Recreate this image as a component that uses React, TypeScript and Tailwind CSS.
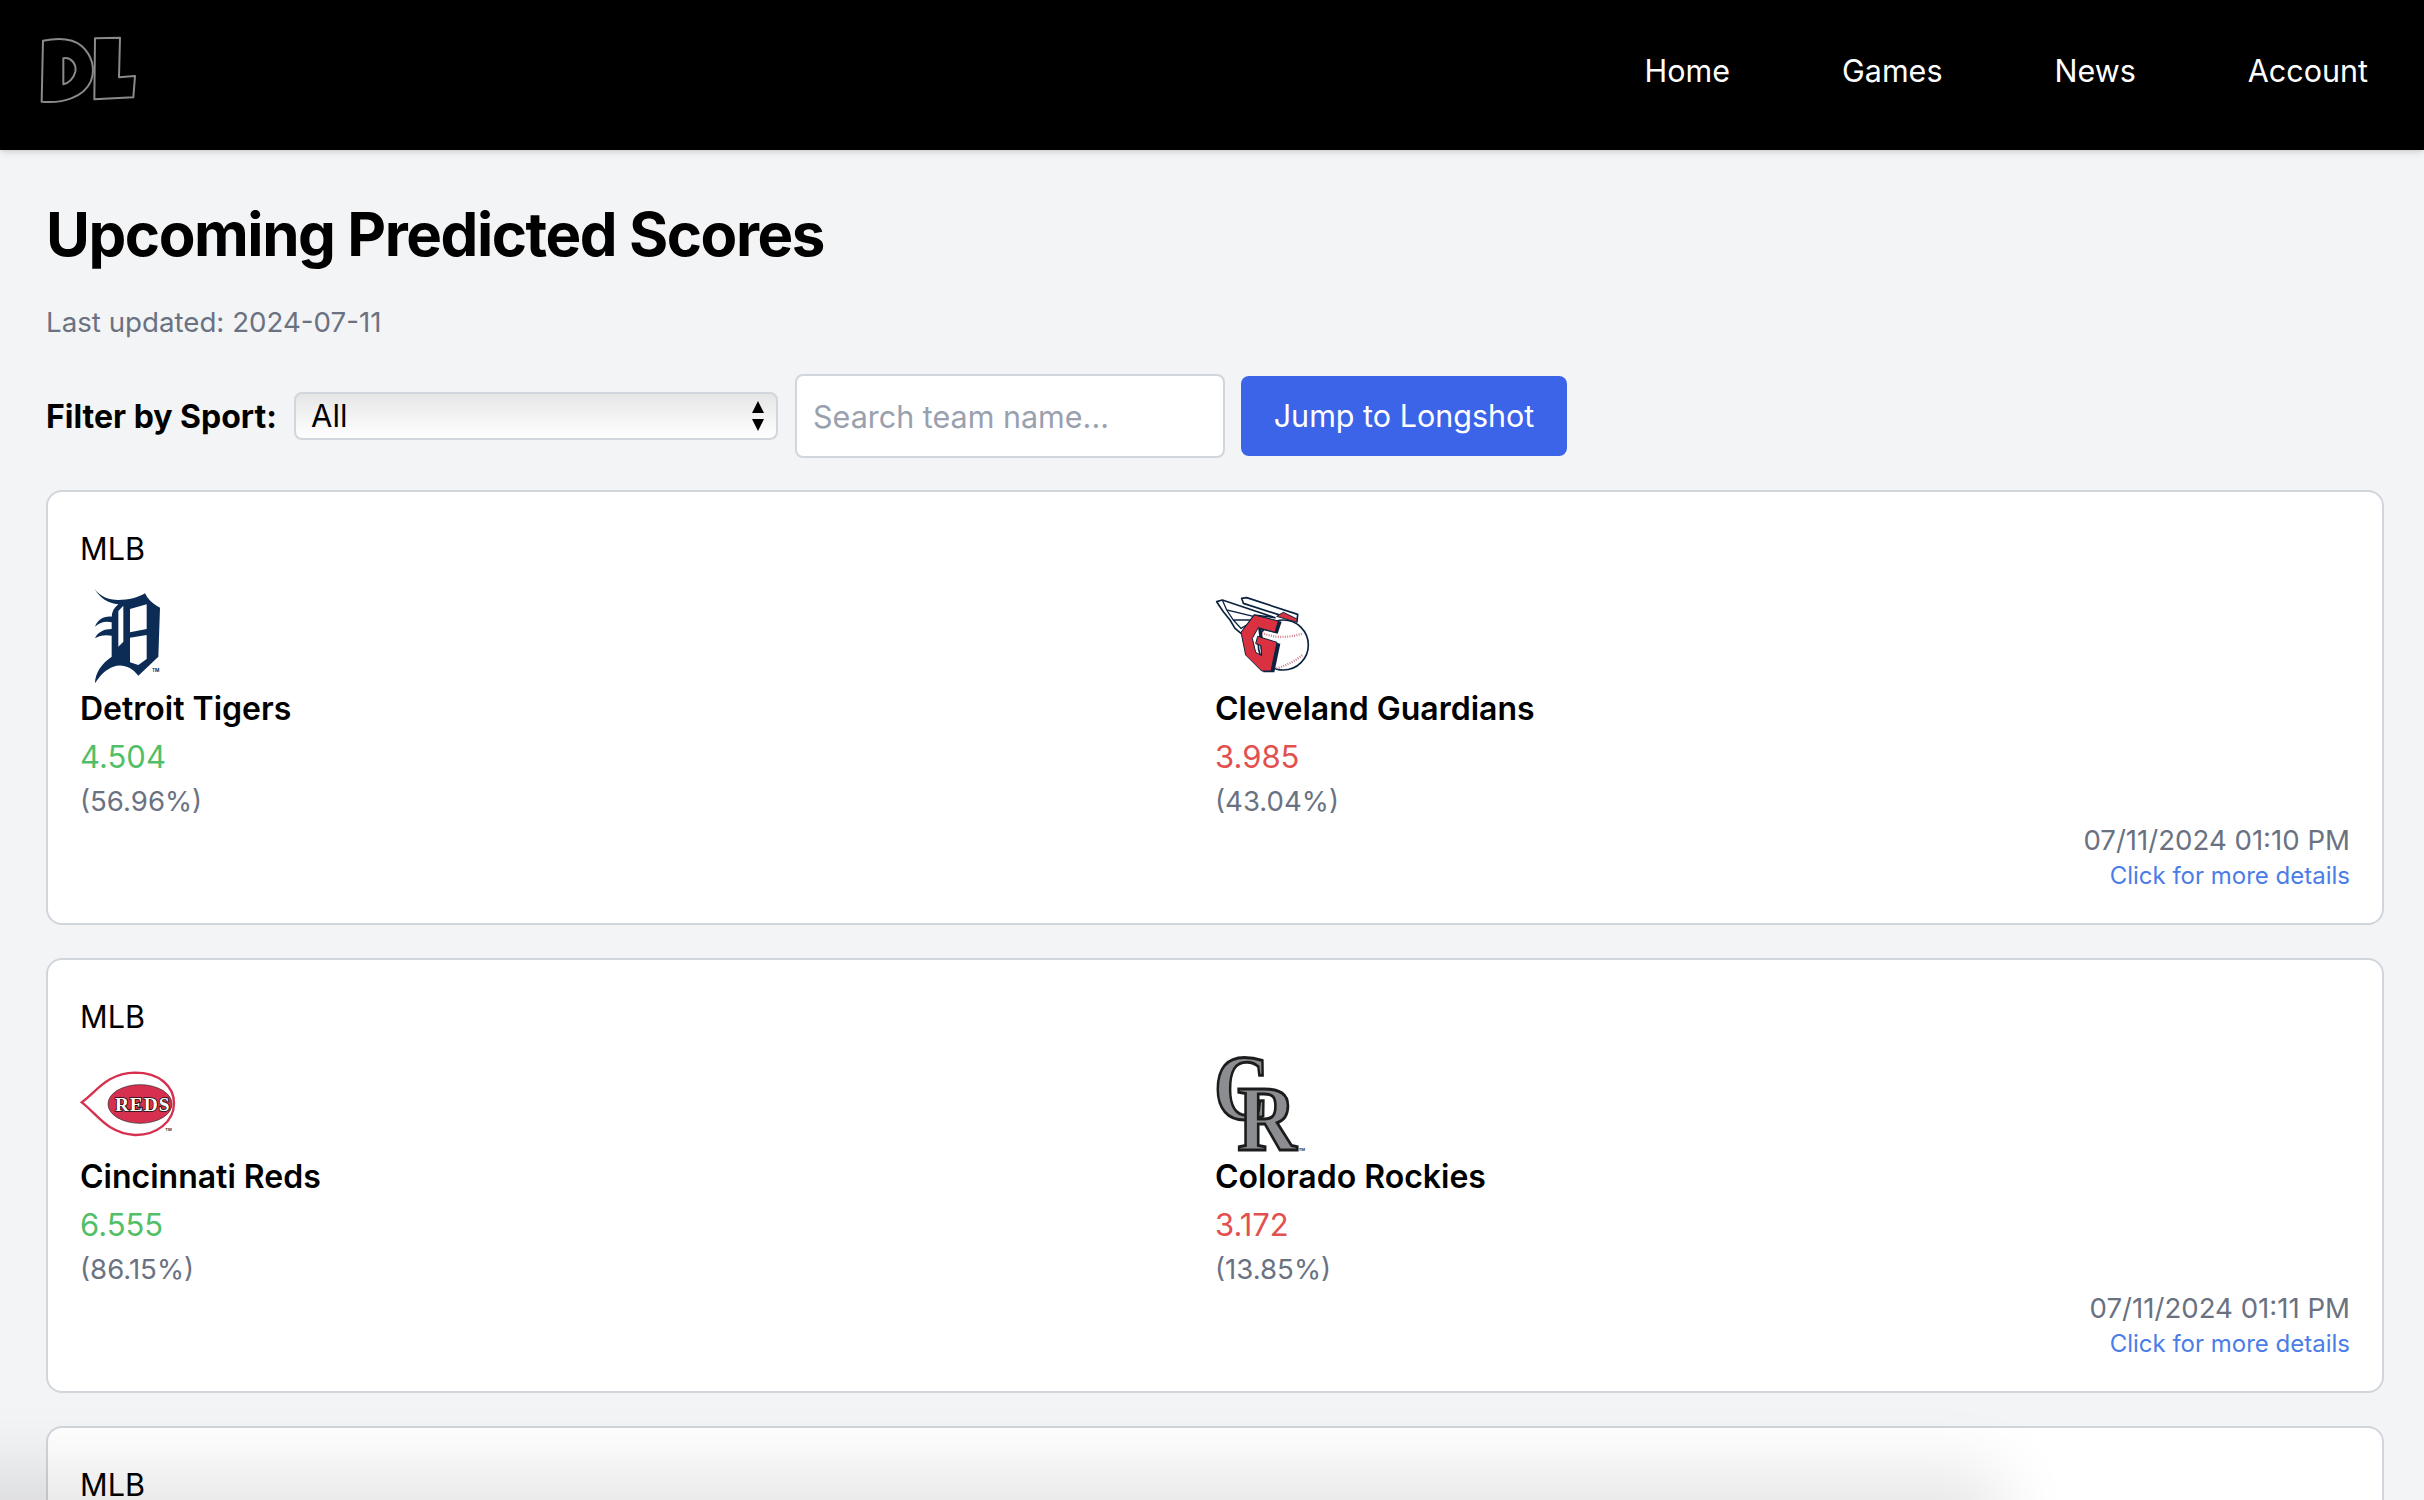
// Predicted scores page: nav, filter row, game cards
const GAMES = [
  {
    home: { name: "Detroit Tigers", score: "4.504", pct: "(56.96%)", logo: "tigers" },
    away: { name: "Cleveland Guardians", score: "3.985", pct: "(43.04%)", logo: "guardians" },
    date: "07/11/2024 01:10 PM",
  },
  {
    home: { name: "Cincinnati Reds", score: "6.555", pct: "(86.15%)", logo: "reds" },
    away: { name: "Colorado Rockies", score: "3.172", pct: "(13.85%)", logo: "rockies" },
    date: "07/11/2024 01:11 PM",
  },
];

function DlLogo() {
  return (
    <svg viewBox="0 0 900 450" className="w-[300px] h-[150px] shrink-0" fill="none" stroke="#8a8a8a" strokeWidth="6" strokeLinejoin="round">
      <path d="M129 122 C170 114 215 112 245 138 C275 165 288 205 272 245 C252 290 190 312 125 305 Z" />
      <path d="M190 175 C213 170 230 192 226 215 C221 235 206 250 190 253 Z" />
      <path d="M285 115 L360 113 L357 232 L405 228 L400 292 L283 298 Z" />
    </svg>
  );
}

function Tigers() {
  return (
    <svg viewBox="-30 3 300 300" className="h-[100px] w-[100px] overflow-visible">
      <path
        fill="#0c2c56"
        d="M12 10 C30 35 55 45 85 45 C115 45 145 38 165 25 C172 40 185 55 210 68 L205 215 L145 272 C125 245 95 235 70 245 C50 252 30 270 15 295 C15 265 35 235 65 215 L65 152 C45 148 28 152 15 160 C22 142 42 132 65 132 L65 112 C45 108 30 112 15 125 C22 105 42 92 65 95 C66 80 72 68 85 58 C55 55 30 40 12 10 Z"
      />
      <path fill="#fff" d="M120 72 L170 58 L170 132 L120 142 Z M120 158 L170 150 L170 222 L145 240 L120 232 Z M85 78 L100 62 L100 170 L85 185 Z" />
      <text x="186" y="262" fontSize="14" fontWeight="700" fill="#0c2c56" fontFamily="Inter, sans-serif">TM</text>
    </svg>
  );
}

function Guardians() {
  return (
    <svg viewBox="0 -27 300 300" className="h-[100px] w-[100px] overflow-visible">
      <circle cx="205" cy="150" r="75" fill="#fff" stroke="#0c2340" strokeWidth="5" />
      <path fill="none" stroke="#d0808f" strokeWidth="7" strokeDasharray="3 4" d="M135 110 C170 130 220 130 265 115 M178 222 C205 215 240 200 262 180" />
      <path fill="#fff" stroke="#0c2340" strokeWidth="5" strokeLinejoin="round" d="M80 10 L95 8 L248 58 L246 80 L200 62 L85 25 Z" />
      <path fill="#fff" stroke="#0c2340" strokeWidth="5" strokeLinejoin="round" d="M5 20 L22 15 L180 68 L118 60 L78 115 L60 100 L45 75 L25 50 Z" />
      <path fill="none" stroke="#0c2340" strokeWidth="4" d="M22 15 L35 45 L140 70 M35 45 L55 75 L108 75 M55 75 L78 100 L95 90" />
      <path fill="#d9313f" stroke="#0c2340" strokeWidth="3" strokeLinejoin="round" d="M185 64 L205 52 L246 72 L246 82 Z" />
      <path fill="#0c2340" d="M125 60 L200 80 L188 116 L140 104 L150 178 L145 184 L138 152 L128 130 L196 146 L178 232 L145 232 Z" />
      <path fill="#d9313f" stroke="#0c2340" strokeWidth="3" strokeLinejoin="round" d="M118 60 L190 78 L180 112 L130 98 L112 130 L122 172 L140 182 L138 152 L122 146 L128 124 L186 142 L168 228 L140 228 L92 180 L78 112 Z" />
    </svg>
  );
}

function Reds() {
  return (
    <svg viewBox="60 12 300 300" className="h-[100px] w-[100px] overflow-visible">
      <path fill="#fff" stroke="#d7304f" strokeWidth="7" d="M65 157 C110 125 140 70 225 68 C300 68 342 110 342 160 C342 215 290 256 225 255 C140 250 110 190 65 157 Z" />
      <ellipse cx="240" cy="162" rx="96" ry="58" fill="#d7304f" stroke="#222" strokeWidth="2" />
      <text x="248" y="183" textAnchor="middle" fontSize="58" fontWeight="700" letterSpacing="3" fill="#fff" stroke="#111" strokeWidth="5" paintOrder="stroke" fontFamily="'Liberation Serif', serif">REDS</text>
      <text x="316" y="242" fontSize="12" fontWeight="700" fill="#333" fontFamily="Inter, sans-serif">TM</text>
    </svg>
  );
}

function Rockies() {
  return (
    <svg viewBox="45 42 300 300" className="h-[100px] w-[100px] overflow-visible">
      <g fill="#8b8d90" stroke="#1c1c1c" strokeWidth="9" fontWeight="700" fontSize="280" fontFamily="'Liberation Serif', serif">
        <text transform="translate(42 236) scale(0.82 1)">C</text>
        <text transform="translate(112 330) scale(0.88 1)">R</text>
      </g>
      <text x="296" y="334" fontSize="12" fontWeight="700" fill="#333" fontFamily="Inter, sans-serif">TM</text>
    </svg>
  );
}

function Logo({ name }: { name: string }) {
  if (name === "tigers") return <Tigers />;
  if (name === "guardians") return <Guardians />;
  if (name === "reds") return <Reds />;
  return <Rockies />;
}

function Team({
  team,
  scoreColor,
}: {
  team: { name: string; score: string; pct: string; logo: string };
  scoreColor: string;
}) {
  return (
    <div>
      <Logo name={team.logo} />
      <p className="mt-[3px] text-[32px] leading-[40px] font-semibold text-black">{team.name}</p>
      <p className={`mt-[8px] text-[31px] leading-[40px] ${scoreColor}`}>{team.score}</p>
      <p className="mt-[4px] text-[27.6px] leading-[40px] text-gray-500">{team.pct}</p>
    </div>
  );
}

function GameCard({ game }: { game: (typeof GAMES)[number] }) {
  return (
    <div className="mb-[33px] h-[435px] rounded-2xl border-2 border-gray-300 bg-white px-[32px] pt-[37px]">
      <p className="mb-[17px] text-[30.6px] leading-[40px] text-black">MLB</p>
      <div className="grid grid-cols-2">
        <Team team={game.home} scoreColor="text-[#52bf68]" />
        <Team team={game.away} scoreColor="text-[#e2504f]" />
      </div>
      <div className="text-right">
        <p className="-mt-[1px] text-[27.6px] leading-[40px] text-gray-500">{game.date}</p>
        <p className="-mt-[2px] text-[24px] leading-[36px] text-[#4a7de8]">Click for more details</p>
      </div>
    </div>
  );
}

export default function App() {
  return (
    <div className="relative h-[1500px] overflow-hidden bg-[#f3f4f6] font-['Inter',sans-serif]">
      <nav className="flex h-[150px] items-center justify-between bg-black pr-[56px] shadow-md">
        <DlLogo />
        <div className="flex gap-[112px] pb-[8px] text-[30.5px] text-white">
          <span>Home</span>
          <span>Games</span>
          <span>News</span>
          <span>Account</span>
        </div>
      </nav>

      <main className="pr-[40px] pl-[46px]">
        <h1 className="pt-[48px] text-[60px] leading-[72px] font-bold tracking-[-1.45px] text-black">Upcoming Predicted Scores</h1>
        <p className="mt-[32px] text-[27.7px] leading-[40px] text-gray-500">Last updated: 2024-07-11</p>

        <div className="mt-[32px] mb-[32px] flex h-[84px] items-center">
          <span className="mr-[16px] w-[232px] pt-[2px] text-[32px] font-bold text-black">Filter by Sport:</span>
          <div className="relative mr-[17px] h-[48px] w-[484px] rounded-lg border-2 border-gray-300 bg-gradient-to-b from-[#e6e6e6] to-white">
            <select className="h-full w-full appearance-none pl-[15px] text-[31px] leading-[44px] text-black outline-none">
              <option>All</option>
            </select>
            <svg viewBox="0 0 16 32" className="pointer-events-none absolute top-[6px] right-[10px] h-[32px] w-[16px]" fill="#000">
              <path d="M8 1 L14 13 L2 13 Z M2 19 L14 19 L8 31 Z" />
            </svg>
          </div>
          <input
            className="mr-[16px] h-[84px] w-[430px] rounded-lg border-2 border-gray-300 bg-white px-[16px] text-[30.5px] outline-none placeholder:text-gray-400"
            placeholder="Search team name..."
          />
          <button className="h-[80px] w-[326px] rounded-lg bg-[#3b64e8] text-[30.5px] text-white">Jump to Longshot</button>
        </div>

        {GAMES.map((g) => (
          <GameCard key={g.date} game={g} />
        ))}
        <div className="h-[200px] rounded-2xl border-2 border-gray-300 bg-white px-[32px] pt-[37px]">
          <p className="text-[30.6px] leading-[40px] text-black">MLB</p>
        </div>
      </main>

      {/* dim shadow of the thing off-screen at the bottom */}
      <div className="absolute -bottom-[40px] -left-[40px] h-[40px] w-[2010px] shadow-[0_0_70px_30px_rgba(0,0,0,0.1)]" />
    </div>
  );
}
